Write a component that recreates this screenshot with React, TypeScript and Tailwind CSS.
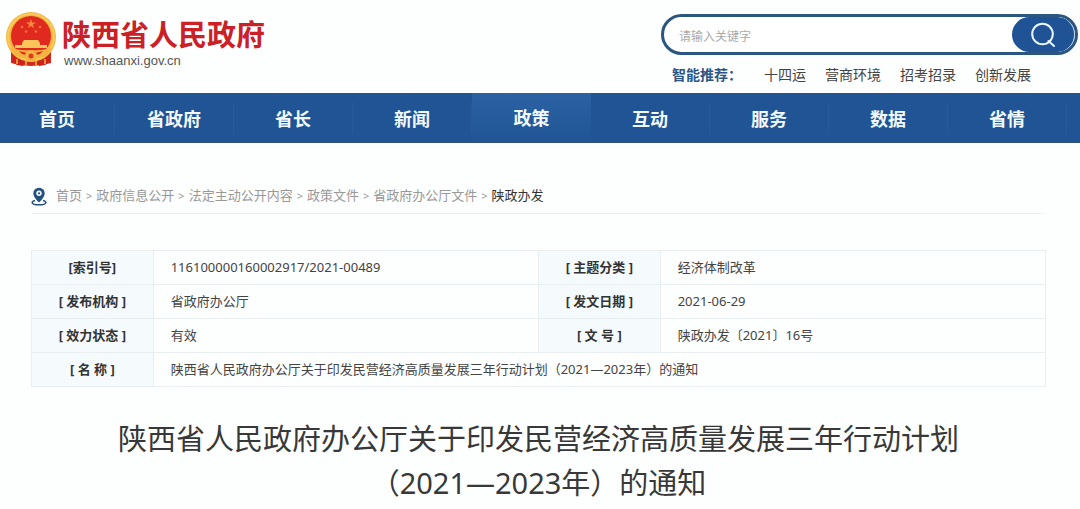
import React from "react";

const navItems = ["首页", "省政府", "省长", "新闻", "政策", "互动", "服务", "数据", "省情"];
const hotWords = ["十四运", "营商环境", "招考招录", "创新发展"];
const crumbs = ["首页", "政府信息公开", "法定主动公开内容", "政策文件", "省政府办公厅文件"];
const rows = [
  ["[索引号]", "116100000160002917/2021-00489", "[ 主题分类 ]", "经济体制改革"],
  ["[ 发布机构 ]", "省政府办公厅", "[ 发文日期 ]", "2021-06-29"],
  ["[ 效力状态 ]", "有效", "[ 文 号 ]", "陕政办发〔2021〕16号"],
];

function Emblem() {
  return (
    <svg viewBox="0 0 52 56" className="h-14 w-[52px] shrink-0" aria-hidden="true">
      <path d="M6 38 6 52l8 2 12 1 12-1 8-2V38z" fill="#d32a20" />
      <circle cx="26" cy="26" r="25" fill="#f3b53f" />
      <circle cx="26" cy="26" r="23" fill="none" stroke="#f8cb5c" strokeWidth="2" />
      <circle cx="26" cy="25" r="20" fill="#e02a1f" />
      <path d="m26 8 1.2 3.5h3.7l-3 2.2 1.1 3.5-3-2.1-3 2.1 1.1-3.5-3-2.2h3.700z" fill="#f58a3c" />
      <g fill="#f0733a">
        <circle cx="17" cy="16" r="1.300" />
        <circle cx="35" cy="16" r="1.300" />
        <circle cx="21" cy="20.500" r="1.300" />
        <circle cx="31" cy="20.500" r="1.300" />
      </g>
      <path d="M17 32l2-3h14l2 3v2h7v3H10v-3h7z" fill="#fbc55a" />
      <path d="M5 37q21 5 42 0l-6 8q-15 6-30 0z" fill="#f5b340" />
      <path d="M14 40q12 4 24 0l-3 3q-9 3-18 0z" fill="#d8301f" />
      <circle cx="26" cy="45" r="6" fill="#f3b53f" />
      <circle cx="26" cy="45" r="2.500" fill="#dc3a22" />
      <path d="M7 43q7 7 13 7l-2 5-6-1-5-4zM45 43q-7 7-13 7l2 5 6-1 5-4z" fill="#cc241c" />
      <path d="M12 48v5M40 48v5M21 50v4M31 50v4" stroke="#f3b53f" strokeWidth="1.500" />
    </svg>
  );
}

function LocationIcon() {
  return (
    <svg viewBox="0 0 16 19" className="h-[19px] w-4 shrink-0" fill="none" stroke="#24507f" aria-hidden="true">
      <path d="M8 14.500C5 11.500 3 9 3 6.400a5 5 0 0 1 10 0C13 9 11 11.500 8 14.500z" fill="#24507f" strokeWidth="1.400" />
      <circle cx="8" cy="6.300" r="2.700" fill="#f4f9fd" stroke="none" />
      <circle cx="8" cy="6.300" r="1.100" fill="#24507f" stroke="none" />
      <path d="M4 13.500C2.200 14 1.200 14.600 1.200 15.500c0 1.400 3 2.300 6.800 2.300s6.800-.9 6.800-2.300c0-.9-1-1.500-2.800-2" strokeWidth="1.600" />
    </svg>
  );
}

export default function App() {
  return (
    <div className="min-h-screen bg-[#fdfefe] font-['Noto_Sans','Noto_Sans_CJK_SC',sans-serif] text-[#444]">
      <header className="flex justify-between pl-[5px] pr-[2px]">
        <a href="#" className="flex gap-[5px] pt-[11px]">
          <Emblem />
          <span className="flex flex-col">
            <span className="font-['Noto_Sans_CJK_SC',sans-serif] text-[29px] leading-[44px] font-bold text-[#cb2026]">
              陕西省人民政府
            </span>
            <span className="pl-[2px] font-['Liberation_Sans',sans-serif] text-[13px] leading-3 text-[#555]">
              www.shaanxi.gov.cn
            </span>
          </span>
        </a>
        <div className="w-[417px] pt-[14px]">
          <form
            className="flex h-[41px] overflow-hidden rounded-full border-[3px] border-[#2b567f] bg-white"
            onSubmit={(e) => e.preventDefault()}
          >
            <input
              type="text"
              aria-label="请输入关键字"
              placeholder="请输入关键字"
              className="min-w-0 flex-1 pt-1 pl-[15px] text-xs outline-none placeholder:text-[#aaa]"
            />
            <button
              type="submit"
              aria-label="搜索"
              className="flex w-[63px] items-center justify-center rounded-full border-r border-[#b9d2ea] bg-[#1f5396]"
            >
              <svg viewBox="0 0 26 26" className="size-[26px]" fill="none" stroke="#e8f6ff" strokeWidth="2" aria-hidden="true">
                <circle cx="12.500" cy="12" r="10.300" />
                <path d="m18.500 19 5.500 5" strokeLinecap="round" />
              </svg>
            </button>
          </form>
          <div className="flex h-[38px] items-center gap-[19px] pt-px pl-[11px] text-sm">
            <span className="mr-[3px] font-bold text-[#2c5686]">智能推荐：</span>
            {hotWords.map((w) => (
              <a key={w} href="#" className="text-[#444]">
                {w}
              </a>
            ))}
          </div>
        </div>
      </header>

      <nav className="grid h-[50px] grid-cols-[115fr_repeat(8,119fr)_13fr] items-center border-y border-[#2f5379] bg-[#205494]">
        {navItems.map((item) => (
          <a
            key={item}
            href="#"
            className={
              item === "政策"
                ? "-mt-px flex h-[49px] items-center justify-center bg-linear-to-b from-[#2c62a4] to-[#205494] pt-px text-lg font-bold text-[#f0faff]"
                : "flex h-8 items-center justify-center border-r border-[#28599a] pt-px text-lg font-bold text-[#f0faff]"
            }
          >
            {item}
          </a>
        ))}
      </nav>

      <main className="pr-[34px] pl-[31px]">
        <div className="flex h-[71px] items-end border-b border-[#f1f1f1] pb-[7px]">
          <LocationIcon />
          <ol className="flex pl-[9px] text-[13px] leading-5 text-[#999]">
            {crumbs.map((c) => (
              <li key={c}>
                <a href="#">{c}</a>
                <span className="px-1 text-[11px]">&gt;</span>
              </li>
            ))}
            <li className="text-[#333]">陕政办发</li>
          </ol>
        </div>

        <table className="mt-9 w-full table-fixed border-collapse text-[13px]">
          <colgroup>
            <col className="w-[12%]" />
            <col className="w-[38%]" />
            <col className="w-[12%]" />
            <col className="w-[38%]" />
          </colgroup>
          <tbody>
            {rows.map((r) => (
              <tr key={r[0]} className="h-[34px]">
                <th scope="row" className="border border-[#e9eef1] bg-[#f5fafd] font-bold text-[#333]">
                  {r[0]}
                </th>
                <td className="border border-[#e9eef1] px-[17px]">{r[1]}</td>
                <th scope="row" className="border border-[#e9eef1] bg-[#f5fafd] font-bold text-[#333]">
                  {r[2]}
                </th>
                <td className="border border-[#e9eef1] px-[17px]">{r[3]}</td>
              </tr>
            ))}
            <tr className="h-[34px]">
              <th scope="row" className="border border-[#e9eef1] bg-[#f5fafd] font-bold text-[#333]">
                [ 名 称 ]
              </th>
              <td colSpan={3} className="border border-[#e9eef1] px-[17px]">
                陕西省人民政府办公厅关于印发民营经济高质量发展三年行动计划（2021—2023年）的通知
              </td>
            </tr>
          </tbody>
        </table>

        <h1 className="pt-[30px] text-center text-[29px] leading-[44px] text-[#383838]">
          陕西省人民政府办公厅关于印发民营经济高质量发展三年行动计划
          <br />
          （2021—2023年）的通知
        </h1>
      </main>
    </div>
  );
}
